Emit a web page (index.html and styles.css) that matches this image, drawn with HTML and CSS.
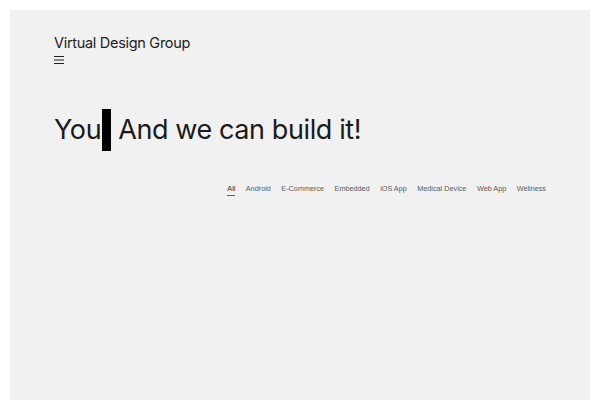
FILE: index.html
```html
<!DOCTYPE html>
<html lang="en">
<head>
<meta charset="utf-8">
<title>Virtual Design Group</title>
<link rel="stylesheet" href="styles.css">
</head>
<body>
<div class="page">
  <header class="header">
    <div class="brand">Virtual Design Group</div>
    <button class="menu" aria-label="Menu">
      <svg width="10" height="8" viewBox="0 0 10 8"><path d="M0 0.5H10M0 4H10M0 7.5H10" stroke="#222" stroke-width="1"/></svg>
    </button>
  </header>
  <h1 class="headline"><span>You</span><span class="cursor"></span><span>And we can build it!</span></h1>
  <nav class="filters">
    <a class="filter active">All</a>
    <a class="filter">Android</a>
    <a class="filter">E-Commerce</a>
    <a class="filter">Embedded</a>
    <a class="filter">iOS App</a>
    <a class="filter">Medical Device</a>
    <a class="filter">Web App</a>
    <a class="filter">Wellness</a>
  </nav>
</div>
</body>
</html>
```
FILE: styles.css
```css
html, body { margin: 0; padding: 0; background: #fff; }
body { padding: 10px 10px 0; }
.page {
  background: #f1f1f1;
  min-height: 420px;
  padding: 24px 44px 0;
  box-sizing: border-box;
  font-family: Inter, "Liberation Sans", sans-serif;
  color: #1a1a1a;
  display: flex;
  flex-direction: column;
}
.header { display: flex; flex-direction: column; align-items: flex-start; }
.brand { font-size: 14.5px; line-height: 18px; letter-spacing: -0.3px; color: #222; }
.menu { border: 0; background: none; padding: 0; margin-top: 4px; display: flex; height: 8px; }
.headline {
  margin: 45px 0 0;
  font-size: 27px;
  font-weight: 400;
  line-height: 42px;
  display: flex;
  align-items: center;
  letter-spacing: -0.4px;
  color: #1a1a1a;
}
.cursor { display: inline-block; width: 9px; height: 42px; background: #000; margin: 0 7px 0 1px; }
.filters {
  margin-top: 33px;
  display: flex;
  justify-content: flex-end;
  gap: 10.5px;
  font-family: "Liberation Sans", Arial, sans-serif;
  font-size: 7.25px;
}
.filter { color: #5a5a5a; line-height: 10px; padding-bottom: 1px; }
.filter.active { color: #333; border-bottom: 1px solid #666; }
```
